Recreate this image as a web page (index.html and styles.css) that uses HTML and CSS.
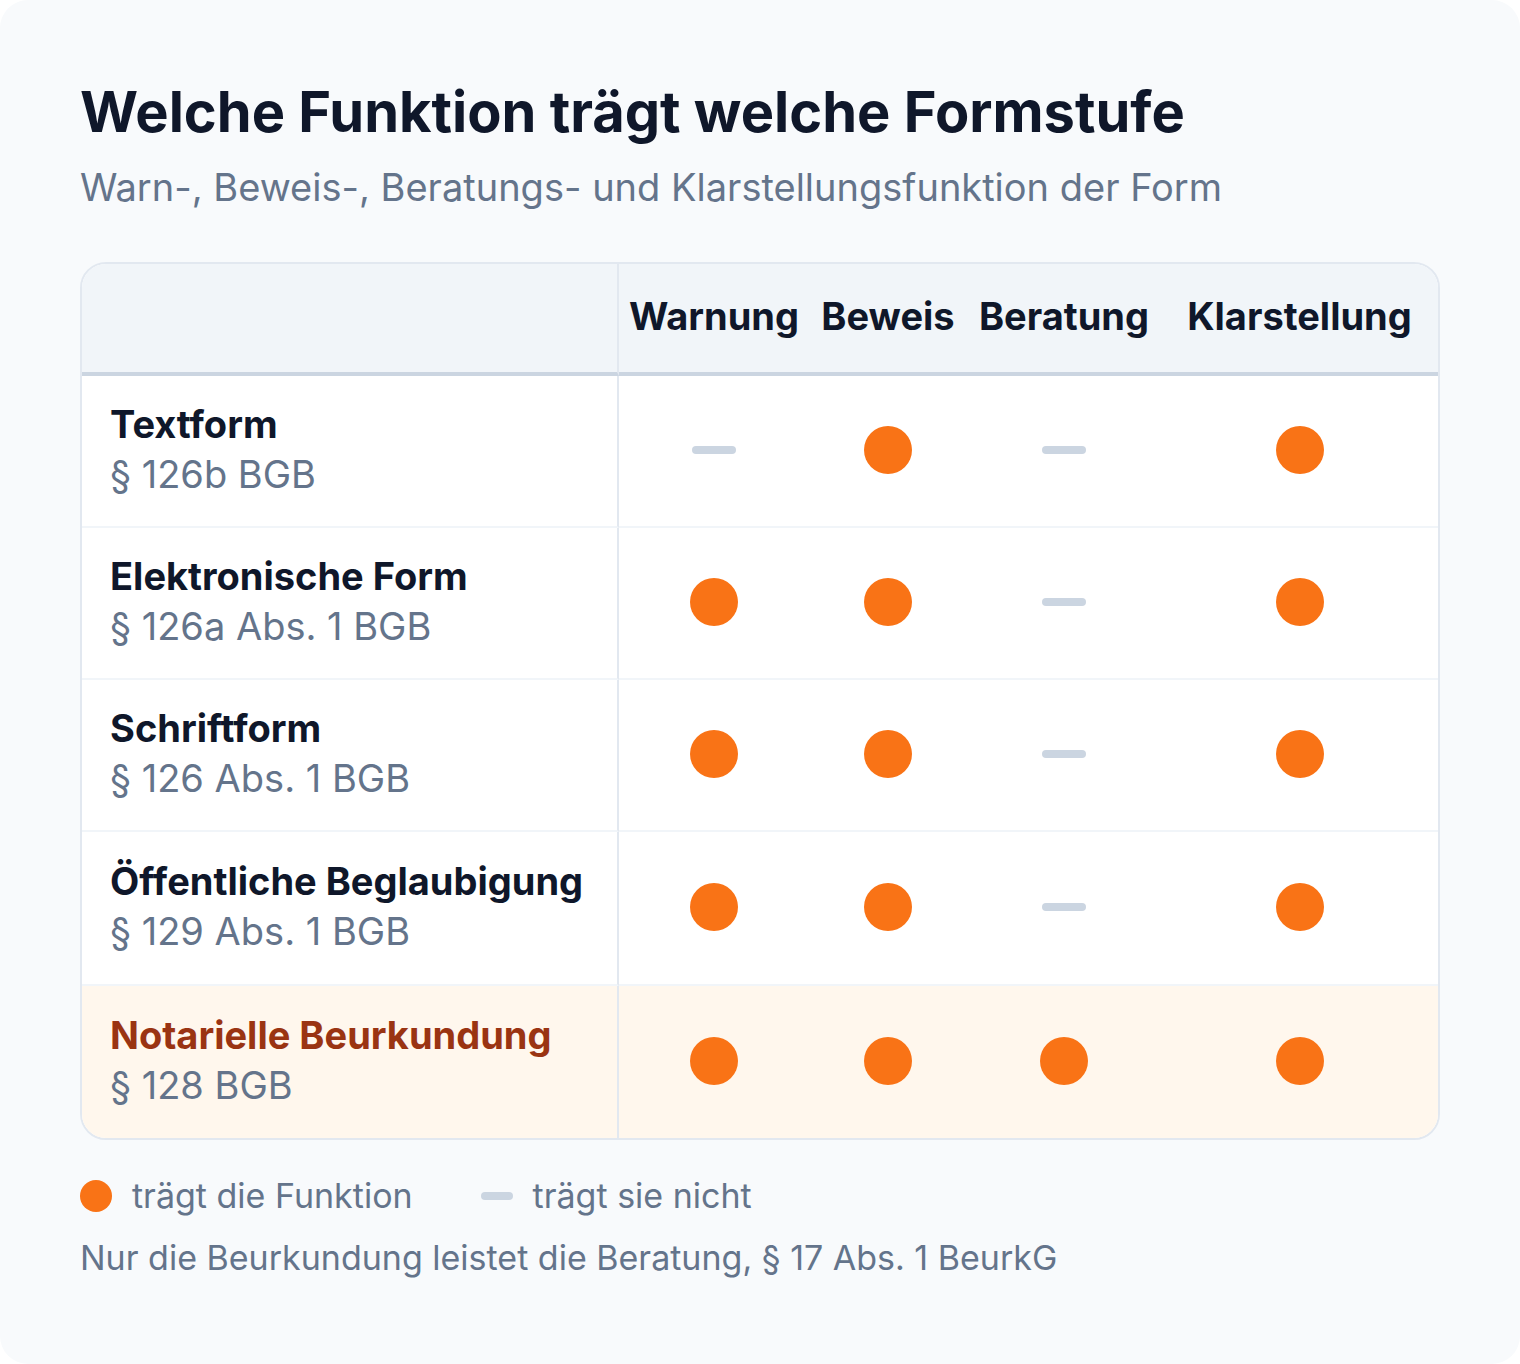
FILE: index.html
```html
<!DOCTYPE html>
<html lang="de">
<head>
<meta charset="utf-8">
<title>Formstufen</title>
<link rel="stylesheet" href="styles.css">
</head>
<body>
<div class="card">
  <h1 class="title">Welche Funktion trägt welche Formstufe</h1>
  <p class="subtitle">Warn-, Beweis-, Beratungs- und Klarstellungsfunktion der Form</p>

  <div class="table-wrap">
    <table class="matrix">
      <colgroup>
        <col class="c-label">
        <col class="c-warn">
        <col class="c-bew">
        <col class="c-ber">
        <col class="c-klar">
      </colgroup>
      <thead>
        <tr>
          <th class="corner"></th>
          <th>Warnung</th>
          <th>Beweis</th>
          <th>Beratung</th>
          <th>Klarstellung</th>
        </tr>
      </thead>
      <tbody>
        <tr>
          <td class="label"><div class="name">Textform</div><div class="ref">§ 126b BGB</div></td>
          <td><span class="dash"></span></td>
          <td><span class="dot"></span></td>
          <td><span class="dash"></span></td>
          <td><span class="dot"></span></td>
        </tr>
        <tr>
          <td class="label"><div class="name">Elektronische Form</div><div class="ref">§ 126a Abs. 1 BGB</div></td>
          <td><span class="dot"></span></td>
          <td><span class="dot"></span></td>
          <td><span class="dash"></span></td>
          <td><span class="dot"></span></td>
        </tr>
        <tr>
          <td class="label"><div class="name">Schriftform</div><div class="ref">§ 126 Abs. 1 BGB</div></td>
          <td><span class="dot"></span></td>
          <td><span class="dot"></span></td>
          <td><span class="dash"></span></td>
          <td><span class="dot"></span></td>
        </tr>
        <tr class="tall">
          <td class="label"><div class="name">Öffentliche Beglaubigung</div><div class="ref">§ 129 Abs. 1 BGB</div></td>
          <td><span class="dot"></span></td>
          <td><span class="dot"></span></td>
          <td><span class="dash"></span></td>
          <td><span class="dot"></span></td>
        </tr>
        <tr class="highlight">
          <td class="label"><div class="name">Notarielle Beurkundung</div><div class="ref">§ 128 BGB</div></td>
          <td><span class="dot"></span></td>
          <td><span class="dot"></span></td>
          <td><span class="dot"></span></td>
          <td><span class="dot"></span></td>
        </tr>
      </tbody>
    </table>
  </div>

  <div class="legend">
    <div class="legend-item"><span class="dot small"></span><span>trägt die Funktion</span></div>
    <div class="legend-item"><span class="dash small"></span><span>trägt sie nicht</span></div>
  </div>
  <p class="note">Nur die Beurkundung leistet die Beratung, § 17 Abs. 1 BeurkG</p>
</div>
</body>
</html>
```
FILE: styles.css
```css
* { box-sizing: border-box; }

html, body {
  margin: 0;
  padding: 0;
  background: #ffffff;
}

body {
  font-family: Inter, "Noto Sans", "Liberation Sans", sans-serif;
  color: #0f172a;
}

.card {
  width: 1520px;
  height: 1364px;
  background: #f8fafc;
  border-radius: 28px;
  padding: 79px 80px 0 80px;
}

.title {
  margin: 0;
  font-size: 56px;
  line-height: 1.2;
  font-weight: 700;
  color: #0f172a;
}

.subtitle {
  margin: 16px 0 0 0;
  font-size: 38px;
  line-height: 50px;
  font-weight: 400;
  color: #64748b;
}

.table-wrap {
  margin-top: 50px;
  border: 2px solid #e2e8f0;
  border-radius: 26px;
  overflow: hidden;
  background: #ffffff;
}

.matrix {
  width: 100%;
  border-collapse: separate;
  border-spacing: 0;
  table-layout: fixed;
}

.c-label { width: 537px; }
.c-warn { width: 190px; }
.c-bew { width: 158px; }
.c-ber { width: 194px; }
.c-klar { width: 277px; }

.matrix thead th {
  background: #f1f5f9;
  height: 112px;
  padding: 0 0 4px 0;
  border-bottom: 4px solid #cbd5e1;
  font-size: 38px;
  line-height: 50px;
  font-weight: 700;
  color: #0f172a;
  text-align: center;
  vertical-align: middle;
  white-space: nowrap;
}

.matrix thead th.corner {
  border-right: 2px solid #e2e8f0;
}

.matrix tbody td {
  height: 152px;
  padding: 0 0 2px 0;
  border-bottom: 2px solid #f1f5f9;
  text-align: center;
  vertical-align: middle;
}

.matrix tbody tr.tall td {
  height: 154px;
}

.matrix tbody tr:last-child td {
  border-bottom: none;
  height: 152px;
}

.matrix tbody td.label {
  text-align: left;
  padding: 0 0 4px 28px;
  border-right: 2px solid #e2e8f0;
}

.name {
  font-size: 38px;
  line-height: 50px;
  font-weight: 700;
  color: #0f172a;
  white-space: nowrap;
}

.ref {
  font-size: 38px;
  line-height: 50px;
  font-weight: 400;
  color: #64748b;
  white-space: nowrap;
}

.highlight td {
  background: #fff7ed;
}

.highlight .name {
  color: #9a3412;
}

.dot {
  display: block;
  margin: 0 auto;
  width: 48px;
  height: 48px;
  border-radius: 50%;
  background: #f97316;
}

.dash {
  display: block;
  margin: 0 auto;
  width: 44px;
  height: 8px;
  border-radius: 4px;
  background: #cbd5e1;
}

.legend {
  display: flex;
  align-items: center;
  gap: 68px;
  margin-top: 34px;
}

.legend-item {
  display: flex;
  align-items: center;
  gap: 20px;
  font-size: 34px;
  line-height: 44px;
  color: #64748b;
}

.dot.small {
  margin: 0;
  width: 32px;
  height: 32px;
}

.dash.small {
  margin: 0;
  width: 32px;
  height: 8px;
}

.note {
  margin: 18px 0 0 0;
  font-size: 34px;
  line-height: 44px;
  color: #64748b;
}
```
